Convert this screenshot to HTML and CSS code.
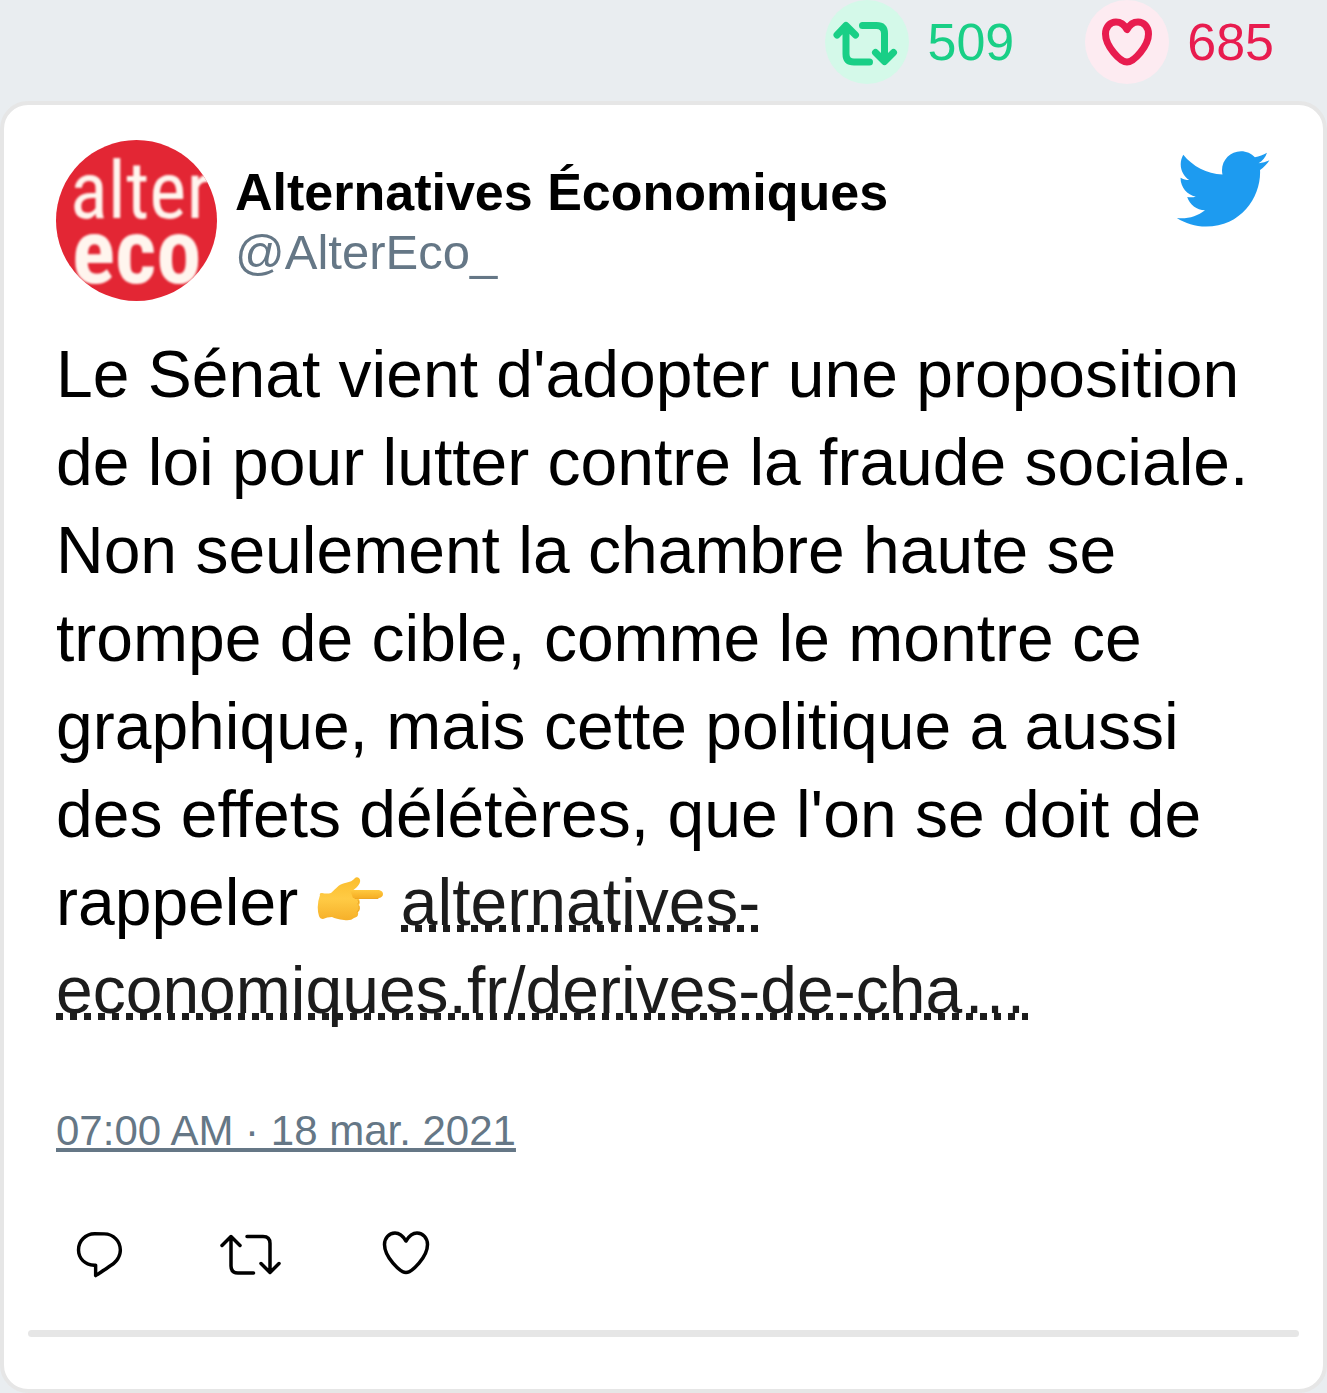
FILE: index.html
```html
<!DOCTYPE html>
<html lang="fr">
<head>
<meta charset="utf-8">
<meta name="viewport" content="width=device-width, initial-scale=1">
<title>Alternatives Économiques</title>
<link rel="stylesheet" href="styles.css">
</head>
<body>
<header class="counts">
  <div class="count count--retweet">
    <span class="count__badge">
      <svg viewBox="0 0 84 84" aria-hidden="true"><path d="M12 35L21 25.500L30.500 35M21 27V54Q21 62 29 62H44.500M37.500 25.500H51.500Q59.500 25.500 59.500 33.500V60M50.500 52.500L59.500 61.500L68.500 52.500"/></svg>
    </span>
    <span>509</span>
  </div>
  <div class="count count--like">
    <span class="count__badge">
      <svg viewBox="0 0 84 84" aria-hidden="true"><path d="M42 29.500C39 24 35 22 31 22C25 22 20.500 27 20.500 34C20.500 46 35 62 42 62C49 62 63.500 46 63.500 34C63.500 27 59 22 53 22C49 22 45 24 42 29.500Z"/></svg>
    </span>
    <span>685</span>
  </div>
</header>

<article class="card">
  <header class="author">
    <svg class="author__avatar" viewBox="0 0 161 161" role="img" aria-label="alter eco">
      <rect width="161" height="161" fill="#e32634"/>
      <g class="author__logo">
        <text class="logo-light" x="14" y="78">alter</text>
        <text class="logo-bold" x="16" y="143">eco</text>
      </g>
    </svg>
    <div class="author__names">
      <strong class="author__name">Alternatives Économiques</strong>
      <span class="author__handle">@AlterEco_</span>
    </div>
    <svg class="author__bird" viewBox="0 0 24 24" aria-label="Twitter" role="img"><path d="M23.643 4.937c-.835.37-1.732.62-2.675.733.962-.576 1.7-1.49 2.048-2.578-.9.534-1.897.922-2.958 1.13-.85-.904-2.06-1.47-3.4-1.47-2.572 0-4.658 2.086-4.658 4.66 0 .364.042.718.12 1.06-3.873-.195-7.304-2.05-9.602-4.868-.4.69-.63 1.49-.63 2.342 0 1.616.823 3.043 2.072 3.878-.764-.025-1.482-.234-2.11-.583v.06c0 2.257 1.605 4.14 3.737 4.568-.392.106-.803.162-1.227.162-.3 0-.593-.028-.877-.082.593 1.85 2.313 3.198 4.352 3.234-1.595 1.25-3.604 1.995-5.786 1.995-.376 0-.747-.022-1.112-.065 2.062 1.323 4.51 2.093 7.14 2.093 8.57 0 13.255-7.098 13.255-13.254 0-.2-.005-.402-.014-.602.91-.658 1.7-1.477 2.323-2.41z"/></svg>
  </header>

  <p class="message">Le Sénat vient d'adopter une proposition de loi pour lutter contre la fraude sociale. Non seulement la chambre haute se trompe de cible, comme le montre ce graphique, mais cette politique a aussi des effets délétères, que l'on se doit de rappeler <svg class="emoji" viewBox="0 0 66 66" role="img" aria-label="👉">
      <defs>
        <linearGradient id="skin" x1="0" y1="0" x2="0" y2="1"><stop offset="0" stop-color="#fbbd2c"/><stop offset=".5" stop-color="#ffcb45"/><stop offset="1" stop-color="#f6b02a"/></linearGradient>
        <linearGradient id="finger" gradientUnits="userSpaceOnUse" x1="0" y1="19" x2="0" y2="27"><stop offset="0" stop-color="#ffc93f"/><stop offset="1" stop-color="#f6ae24"/></linearGradient>
      </defs>
      <path fill="url(#skin)" d="M3 24Q2 22 5 22Q10 23 14 22C18 19 20 15 25 13C31 11 35 11 38 7C40 5 44 7 43 11C42 15 38 18 35 20L41 26Q44 31 42 34Q44 39 41 41Q42 46 37 47Q34 50 27 49Q19 48 15 46Q10 46 6 48Q3 48 2 45Q-1 35 3 24Z"/>
      <path fill="url(#finger)" d="M33 19H62Q66 20 66 23Q66 26 62 27H36Z"/>
      <path fill="none" stroke="#eda626" stroke-width="1" stroke-linecap="round" d="M38 27.500H61M41 29Q43 31 41 33M42 35Q43 39 40 41"/>
    </svg> <a class="message__link" href="#article">alternatives-economiques.fr/derives-de-cha…</a></p>

  <a class="date" href="#tweet"><time datetime="2021-03-18T07:00">07:00 AM · 18 mar. 2021</time></a>

  <div class="actions">
    <button type="button" aria-label="Répondre">
      <svg width="55" height="55" viewBox="0 0 24 24"><path d="M14.046 2.242l-4.148-.01h-.002c-4.374 0-7.8 3.427-7.8 7.802 0 4.098 3.186 7.206 7.465 7.37v3.828c0 .108.044.286.12.403.142.225.384.347.632.347.138 0 .277-.038.402-.118.264-.168 6.473-4.14 8.088-5.506 1.902-1.61 3.04-3.97 3.043-6.312v-.017c-.006-4.367-3.43-7.787-7.8-7.788zm3.787 12.972c-1.134.96-4.862 3.405-6.772 4.643V16.67c0-.414-.335-.75-.75-.75h-.396c-3.66 0-6.318-2.476-6.318-5.886 0-3.534 2.768-6.302 6.3-6.302l4.147.01h.002c3.532 0 6.3 2.766 6.302 6.296-.003 1.91-.942 3.844-2.514 5.176z"/></svg>
    </button>
    <button type="button" aria-label="Retweeter">
      <svg class="line-icon" width="65" height="55" viewBox="0 0 65 55"><path stroke-width="3.5" d="M4 18.500L13 9.500L22 18.500M13 10V39Q13 46 20 46H35.500M29 9.500H45Q52 9.500 52 16.500V45M43 36.500L52 45.500L61 36.500"/></svg>
    </button>
    <button type="button" aria-label="J'aime">
      <svg class="line-icon" width="65" height="55" viewBox="0 0 65 55"><path stroke-width="3.5" d="M32 14C29 9 25.500 6 21 6C15 6 10.500 11 10.500 17.500C10.500 30 26 45.500 32 45.500C38 45.500 53.500 30 53.500 17.500C53.500 11 49 6 43 6C38.500 6 35 9 32 14Z"/></svg>
    </button>
  </div>

  <hr class="rule">
</article>
</body>
</html>
```
FILE: styles.css
```css
* {
  box-sizing: border-box;
}

body {
  margin: 0;
  background: #e9edf0;
  color: #000;
  font-family: "Liberation Sans", Arial, sans-serif;
}

.counts {
  display: flex;
  justify-content: flex-end;
  gap: 71px;
  padding: 0 53px 17px;
}

.count {
  display: flex;
  align-items: center;
  gap: 18px;
  font-size: 52px;
  line-height: 84px;
}

.count--retweet {
  color: #19cf86;
}

.count--like {
  color: #e81c4f;
}

.count__badge {
  width: 84px;
  height: 84px;
  border-radius: 50%;
}

.count--retweet .count__badge {
  background: #d4f9e9;
}

.count--like .count__badge {
  background: #fdebf1;
}

.count__badge svg {
  display: block;
  fill: none;
  stroke: currentColor;
  stroke-width: 7;
  stroke-linecap: round;
  stroke-linejoin: round;
}

.card {
  padding: 35px 52px 52px;
  border: 4px solid #e6e6e6;
  border-radius: 28px;
  background: #fff;
}

.author {
  display: flex;
  align-items: center;
  gap: 18px;
}

.author__avatar {
  flex: none;
  width: 161px;
  height: 161px;
  border-radius: 50%;
}

.author__logo {
  fill: #fff5ee;
  filter: blur(1px);
}

.logo-light {
  font: 79px "Liberation Sans Narrow", "Roboto Condensed", "DejaVu Sans Condensed", sans-serif;
}

.logo-bold {
  font: bold 90px "Liberation Sans Narrow", "Roboto Condensed", "DejaVu Sans Condensed", sans-serif;
}

.author__names {
  display: flex;
  flex: 1;
  flex-direction: column;
  padding-top: 3px;
  line-height: 60px;
}

.author__name {
  font-size: 52px;
}

.author__handle {
  color: #657786;
  font-size: 49px;
}

.author__bird {
  align-self: flex-start;
  width: 98px;
  height: 98px;
  fill: #1d9bf0;
}

.message {
  margin: 29px 0 69px;
  font-size: 66px;
  line-height: 88px;
}

.emoji {
  width: 66px;
  height: 66px;
  vertical-align: -12px;
}

.message__link {
  background: repeating-linear-gradient(90deg, currentColor 0 7px, transparent 7px 14px) left bottom 7px / 100% 7px no-repeat;
  -webkit-box-decoration-break: clone;
  box-decoration-break: clone;
  color: #1c1c1c;
  text-decoration: none;
}

.date {
  display: block;
  width: fit-content;
  color: #657786;
  font-size: 42px;
  line-height: 56px;
}

.actions {
  display: flex;
  gap: 91px;
  margin-top: 68px;
  padding-left: 16px;
}

.actions button {
  padding: 0;
  border: 0;
  background: none;
}

.actions svg {
  display: block;
}

.line-icon {
  fill: none;
  stroke: #000;
  stroke-linecap: round;
  stroke-linejoin: round;
}

.rule {
  height: 7px;
  margin: 48px -28px 0;
  border: 0;
  border-radius: 4px;
  background: #e6e6e6;
}
```
